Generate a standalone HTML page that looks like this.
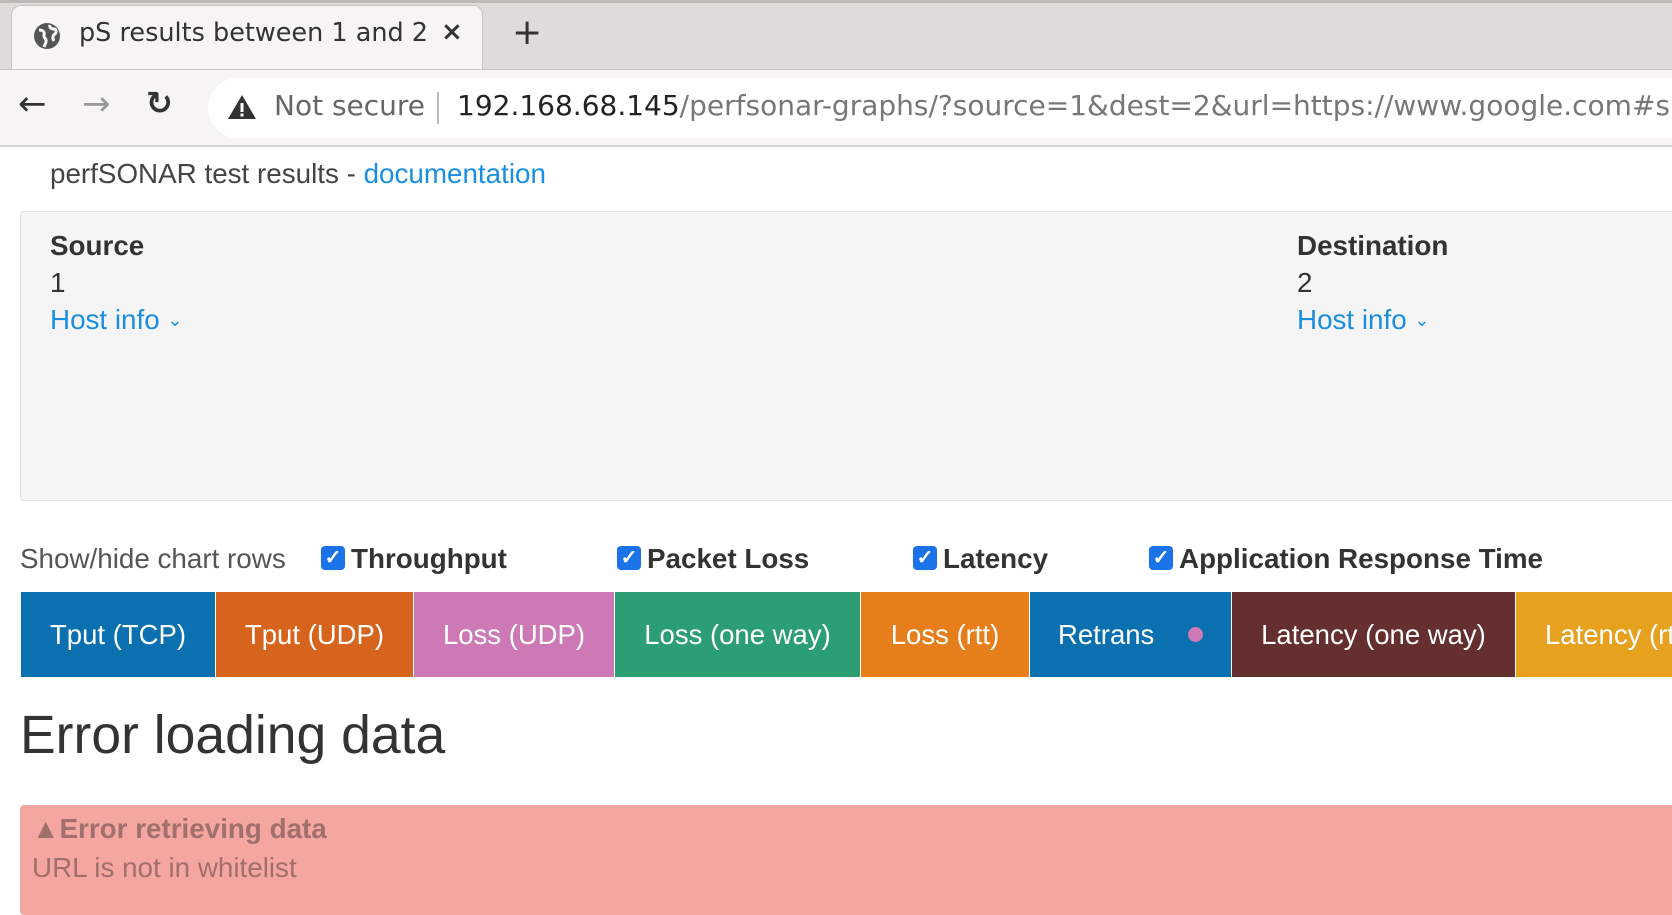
<!DOCTYPE html>
<html><head><meta charset="utf-8"><style>
*{box-sizing:border-box;margin:0;padding:0}
body{width:1672px;height:901px;overflow:hidden;background:#fff;font-family:"Liberation Sans",sans-serif;position:relative}
.abs{position:absolute}
#tabbar{left:0;top:0;width:1672px;height:69px;background:#dedbd8;border-top:3px solid #bdbab6}
#tab{left:11px;top:5px;width:472px;height:66px;background:#f6f5f4;border-radius:10px 10px 0 0;border:1px solid #c8c5c1;border-bottom:none}
.chrome{font-family:"DejaVu Sans",sans-serif}
#toolbar{left:0;top:69px;width:1672px;height:78px;background:#f6f5f4;border-top:1px solid #c8c5c1;border-bottom:2px solid #d6d4d1}
#url{left:208px;top:78px;width:1500px;height:60px;background:#fff;border-radius:30px}
.btn{position:absolute;top:592px;height:85px;color:#fff;font-size:27.5px;display:flex;align-items:center;justify-content:center;white-space:nowrap;overflow:hidden}
.cb{display:inline-block;width:24px;height:24px;background:#1a73e8;border-radius:4px;color:#fff;font-size:20px;line-height:24px;text-align:center;vertical-align:4px;margin-right:6px;font-weight:bold}
.lbl{position:absolute;top:543px;font-size:27.8px;font-weight:bold;color:#333}
.hi{color:#1a8fe0}
.hi small{font-size:18px;vertical-align:3px}
</style></head><body>
<div id="tabbar" class="abs"></div>
<div id="tab" class="abs"></div>
<svg class="abs" style="left:33px;top:22px" width="28" height="28" viewBox="0 0 28 28"><circle cx="14" cy="14" r="13" fill="#555"/><path d="M6 8c4 0 6 2 5 5s3 3 2 7l-2 5M17 3c-1 3 2 4 4 4s3 3 1 5c-2 1-3 4-1 7" stroke="#f6f5f4" stroke-width="3" fill="none"/></svg>
<div class="abs chrome" style="left:79px;top:18px;font-size:25.5px;color:#333;white-space:nowrap">pS results between 1 and 2</div>
<div class="abs chrome" style="left:441px;top:17px;font-size:26px;color:#333;font-weight:bold">×</div>
<div class="abs chrome" style="left:512px;top:12px;font-size:36px;color:#333">+</div>
<div id="toolbar" class="abs"></div>
<div id="url" class="abs"></div>
<div class="abs chrome" style="left:18px;top:84px;font-size:34px;color:#333">←</div>
<div class="abs chrome" style="left:82px;top:84px;font-size:34px;color:#999">→</div>
<div class="abs chrome" style="left:146px;top:84px;font-size:32px;color:#333;font-weight:bold">↻</div>
<svg class="abs" style="left:227px;top:94px" width="30" height="26" viewBox="0 0 30 26"><path d="M15 1L29 25H1Z" fill="#333"/><rect x="13.5" y="9" width="3" height="9" fill="#fff"/><rect x="13.5" y="19.5" width="3" height="3" fill="#fff"/></svg>
<div class="abs chrome" style="left:274px;top:89px;font-size:28px;color:#666;white-space:nowrap">Not secure</div>
<div class="abs" style="left:437px;top:92px;width:2px;height:32px;background:#bbb"></div>
<div class="abs chrome" style="left:457px;top:89px;font-size:28px;color:#777;white-space:nowrap"><span style="color:#222">192.168.68.145</span>/perfsonar-graphs/?source=1&amp;dest=2&amp;url=https://www.google.com#s</div>

<div class="abs" style="left:50px;top:158px;font-size:27.8px;color:#444;white-space:nowrap">perfSONAR test results - <span style="color:#1a8fe0">documentation</span></div>
<div class="abs" style="left:20px;top:211px;width:1700px;height:290px;background:#f5f5f5;border:1px solid #e0e0e0;border-radius:4px"></div>
<div class="abs" style="left:50px;top:227px;font-size:27.8px;color:#333;line-height:37px"><b>Source</b><br>1<br><span class="hi">Host info <small>⌄</small></span></div>
<div class="abs" style="left:1297px;top:227px;font-size:27.8px;color:#333;line-height:37px"><b>Destination</b><br>2<br><span class="hi">Host info <small>⌄</small></span></div>

<div class="abs" style="left:20px;top:543px;font-size:27.8px;color:#555;white-space:nowrap">Show/hide chart rows</div>
<div class="lbl" style="left:321px"><span class="cb">✓</span>Throughput</div>
<div class="lbl" style="left:617px"><span class="cb">✓</span>Packet Loss</div>
<div class="lbl" style="left:913px"><span class="cb">✓</span>Latency</div>
<div class="lbl" style="left:1149px;white-space:nowrap"><span class="cb">✓</span>Application Response Time</div>

<div class="btn" style="left:21px;width:194px;background:#0a70b0">Tput (TCP)</div>
<div class="btn" style="left:216px;width:197px;background:#d7641c">Tput (UDP)</div>
<div class="btn" style="left:414px;width:200px;background:#cc79b6">Loss (UDP)</div>
<div class="btn" style="left:615px;width:245px;background:#2c9e74">Loss (one way)</div>
<div class="btn" style="left:861px;width:168px;background:#e67e1c">Loss (rtt)</div>
<div class="btn" style="left:1030px;width:201px;background:#0a70b0;justify-content:flex-start;padding-left:28px">Retrans<span style="display:inline-block;width:15px;height:15px;border-radius:50%;background:#cc79b6;margin-left:34px"></span></div>
<div class="btn" style="left:1232px;width:283px;background:#652f2f">Latency (one way)</div>
<div class="btn" style="left:1516px;width:200px;background:#e6a11f;justify-content:flex-start;padding-left:29px">Latency (rtt)</div>

<div class="abs" style="left:20px;top:705px;font-size:53.5px;color:#333;white-space:nowrap">Error loading data</div>
<div class="abs" style="left:20px;top:805px;width:1700px;height:110px;background:#f6a6a0;border-radius:4px"></div>
<div class="abs" style="left:32px;top:813px;font-size:27.8px;color:#a0706c;font-weight:bold;white-space:nowrap">▲Error retrieving data</div>
<div class="abs" style="left:32px;top:852px;font-size:27.8px;color:#a0706c;white-space:nowrap">URL is not in whitelist</div>
</body></html>
